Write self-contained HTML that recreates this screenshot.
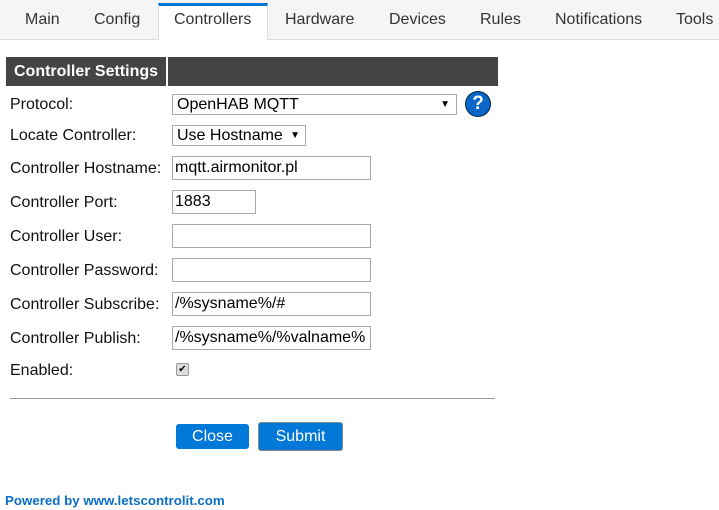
<html><head><style>
body{margin:0;width:719px;height:510px;background:#fff;font-family:"Liberation Sans",sans-serif;color:#000;position:relative;overflow:hidden}
.a{position:absolute}
.tabs{left:0;top:0;width:719px;height:39px;background:#f5f5f5;border-bottom:1px solid #ddd}
.t{font-size:16px;color:#333;top:11px}
.act{left:158px;top:3px;width:108px;height:34px;background:#fff;border-top:3px solid #0078d7;border-left:1px solid #ddd;border-right:1px solid #ddd}
.l{left:10px;font-size:16px;color:#111}
.i{left:172px;border:1px solid #aaa;font-size:16px;line-height:22px;padding-left:2px;box-sizing:border-box;width:199px;height:24px}
.btn{background:#0078d7;color:#fff;font-size:16px;text-align:center;border-radius:3px}
</style></head><body>
<div class="a tabs"></div>
<div class="a act"></div>
<div class="a t" style="left:25px">Main</div>
<div class="a t" style="left:94px">Config</div>
<div class="a t" style="left:174px">Controllers</div>
<div class="a t" style="left:285px">Hardware</div>
<div class="a t" style="left:389px">Devices</div>
<div class="a t" style="left:480px">Rules</div>
<div class="a t" style="left:555px">Notifications</div>
<div class="a t" style="left:676px">Tools</div>
<div class="a" style="left:6px;top:57px;width:160px;height:29px;background:#444"></div>
<div class="a" style="left:168px;top:57px;width:330px;height:29px;background:#444"></div>
<div class="a" style="left:14px;top:63px;font-size:16px;font-weight:bold;color:#fff">Controller Settings</div>
<div class="a l" style="top:96px">Protocol:</div>
<div class="a i" style="top:94px;width:285px;height:21px;line-height:19px;padding-left:4px">OpenHAB MQTT<span style="position:absolute;right:6px;font-size:10px">▼</span></div>
<div class="a" style="left:466px;top:92px;width:24px;height:24px;border-radius:50%;background:#0a66c8;color:#fff;font-weight:bold;font-size:19px;text-align:center;line-height:24px;box-shadow:0 0 0 1px #024">?</div>
<div class="a l" style="top:127px">Locate Controller:</div>
<div class="a i" style="top:125px;width:134px;height:21px;line-height:19px;padding-left:4px">Use Hostname<span style="position:absolute;right:5px;font-size:10px">▼</span></div>
<div class="a l" style="top:160px">Controller Hostname:</div>
<div class="a i" style="top:156px">mqtt.airmonitor.pl</div>
<div class="a l" style="top:194px">Controller Port:</div>
<div class="a i" style="top:190px;width:84px">1883</div>
<div class="a l" style="top:228px">Controller User:</div>
<div class="a i" style="top:224px"></div>
<div class="a l" style="top:262px">Controller Password:</div>
<div class="a i" style="top:258px"></div>
<div class="a l" style="top:296px">Controller Subscribe:</div>
<div class="a i" style="top:292px">/%sysname%/#</div>
<div class="a l" style="top:330px">Controller Publish:</div>
<div class="a i" style="top:326px;overflow:hidden;white-space:nowrap">/%sysname%/%valname%</div>
<div class="a l" style="top:362px">Enabled:</div>
<div class="a" style="left:176px;top:363px;width:11px;height:11px;background:#ddd;border:1px solid #999;border-radius:2px;font-size:10px;line-height:11px;text-align:center">✔</div>
<div class="a" style="left:10px;top:398px;width:485px;height:1px;background:#999"></div>
<div class="a btn" style="left:176px;top:424px;width:73px;height:25px;line-height:25px">Close</div>
<div class="a btn" style="left:258px;top:422px;width:83px;height:27px;line-height:27px;border:1px solid #888">Submit</div>
<div class="a" style="left:5px;top:493px;font-size:13.3px;font-weight:bold;color:#0b6ec7">Powered by www.letscontrolit.com</div>
</body></html>
